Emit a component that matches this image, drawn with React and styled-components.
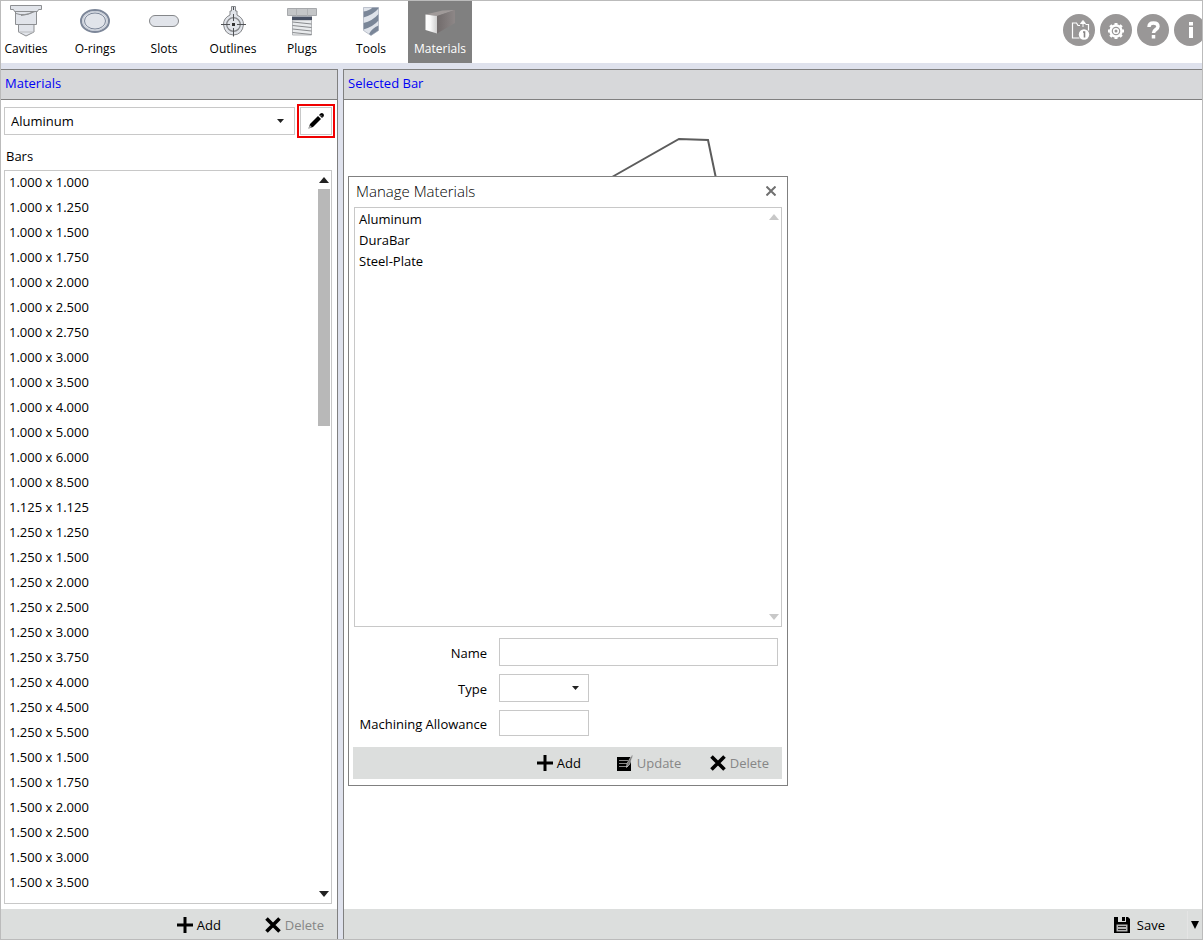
import React, { useState } from 'react';
import styled, { createGlobalStyle } from 'styled-components';

const GlobalStyles = createGlobalStyle`
    *, *::before, *::after {
        box-sizing: border-box;
    }
    html, body {
        margin: 0;
        padding: 0;
        overflow: hidden;
    }
    body, button, input, select {
        font-family: 'Open Sans', 'Noto Sans', sans-serif;
        font-size: 13px;
        line-height: 20px;
        color: #000;
    }
    svg {
        display: block;
        flex-shrink: 0;
    }
`;

const Window = styled.div`
    display: flex;
    flex-direction: column;
    height: 100vh;
    border: 1px solid #bbb;
    background: #dfe2ed;
`;

const TopBar = styled.header`
    display: flex;
    justify-content: space-between;
    height: 62px;
    margin-bottom: 6px;
    background: #fff;
    overflow: hidden;
`;

const Nav = styled.nav`
    display: flex;
    gap: 5px;
    margin-left: -7px;
`;

const NavButton = styled.button`
    display: flex;
    flex-direction: column;
    align-items: center;
    width: 64px;
    padding: 3px 0 0;
    border: 0;
    background: ${({ $active }) => ($active ? '#808080' : 'transparent')};
    color: ${({ $active }) => ($active ? '#fff' : '#000')};
    font-size: 12px;
    line-height: 18px;
`;

const Tools = styled.div`
    display: flex;
    gap: 5px;
    margin: 13px -4px 0 0;
`;

const RoundButton = styled.button`
    width: 32px;
    height: 32px;
    padding: 0;
    border: 0;
    border-radius: 50%;
    background: #999797;
`;

const Body = styled.div`
    display: grid;
    grid-template-columns: 337px minmax(0, 1fr);
    gap: 5px;
    flex: 1;
    min-height: 0;
`;

const Panel = styled.section`
    display: flex;
    flex-direction: column;
    min-height: 0;
    background: #fff;
    border: 0 solid #808080;
    border-width: ${({ $side }) => ($side === 'left' ? '0 1px 0 0' : '0 0 0 1px')};
`;

const PanelTitle = styled.h2`
    margin: 0;
    padding: 3px 4px;
    height: 31px;
    border: 1px solid #808080;
    border-width: 1px 0;
    background: #d7d8da;
    color: #0000f5;
    font-size: 13px;
    font-weight: 400;
`;

const PickerRow = styled.div`
    display: flex;
    align-items: center;
    gap: 2px;
    padding: 4px 2px 0 3px;
`;

const SelectBox = styled.div`
    position: relative;
    width: ${({ $width }) => $width || 'auto'};
    flex: ${({ $width }) => ($width ? 'none' : 1)};

    svg {
        position: absolute;
        right: ${({ $width }) => ($width ? '10px' : '11px')};
        top: 12px;
        pointer-events: none;
    }
`;

const Select = styled.select`
    display: block;
    width: 100%;
    height: 28px;
    padding: 0 24px 0 6px;
    border: 1px solid #c8c8c8;
    border-radius: 0;
    background: #fff;
    appearance: none;
`;

const Highlight = styled.div`
    padding: 1px;
    border: 2px solid #f00000;
`;

const EditButton = styled.button`
    display: flex;
    align-items: center;
    justify-content: center;
    width: 32px;
    height: 28px;
    padding: 0;
    border: 1px solid #c8c8c8;
    background: #fff;
`;

const ListLabel = styled.h3`
    margin: 8px 0 4px 5px;
    font-size: 13px;
    font-weight: 400;
`;

const ListBox = styled.div`
    display: flex;
    flex: 1;
    min-height: 0;
    margin: ${({ $margin }) => $margin};
    border: 1px solid #c8c8c8;
    background: #fff;
`;

const List = styled.ul`
    flex: 1;
    margin: 0;
    padding: 0 0 0 4px;
    overflow: hidden;
    list-style: none;
`;

const BarRow = styled.li`
    height: 25px;
    line-height: 23px;
`;

const MaterialRow = styled.li`
    height: 21px;
    line-height: 23px;
`;

const ScrollTrack = styled.div`
    display: flex;
    flex-direction: column;
    align-items: center;
    justify-content: space-between;
    width: 14px;
    padding: 6px 0;
`;

const ScrollBody = styled.div`
    flex: 1;
    width: 12px;
    margin: 6px 0;
`;

const ScrollThumb = styled.div`
    height: 34%;
    background: #b8b8b8;
`;

const ActionBar = styled.footer`
    display: grid;
    grid-template-columns: ${({ $columns }) => $columns};
    justify-content: end;
    align-items: center;
    height: ${({ $height }) => $height || 30}px;
    padding: ${({ $height }) => ($height ? '0' : '2px')} 13px 0 0;
    background: #dcdedd;
`;

const Action = styled.button`
    display: flex;
    align-items: center;
    gap: ${({ $gap }) => $gap || 4}px;
    padding: 0;
    border: 0;
    background: none;

    &:disabled {
        color: #868686;
    }
`;

const Canvas = styled.div`
    position: relative;
    flex: 1;
    min-height: 0;
`;

const Dialog = styled.div`
    position: absolute;
    top: 76px;
    left: 4px;
    display: flex;
    flex-direction: column;
    width: 440px;
    height: 610px;
    padding: 0 5px 6px 4px;
    border: 1px solid #808080;
    background: #fff;
`;

const DialogHeader = styled.div`
    display: flex;
    align-items: center;
    justify-content: space-between;
    height: 30px;
    padding: 0 6px 2px 3px;
`;

const DialogTitle = styled.h2`
    margin: 0;
    font-size: 15px;
    font-weight: 300;
`;

const CloseButton = styled.button`
    padding: 0;
    border: 0;
    background: none;
`;

const Form = styled.form`
    display: grid;
    grid-template-columns: 134px 1fr;
    grid-template-rows: 28px 28px 26px;
    column-gap: 12px;
    row-gap: 8px;
    align-items: center;
    padding: 11px 4px 11px 0;
`;

const Label = styled.label`
    padding-top: 2px;
    text-align: right;
`;

const Input = styled.input`
    width: ${({ $width }) => $width || '100%'};
    height: 100%;
    padding: 0 6px;
    border: 1px solid #c8c8c8;
`;

const SaveBar = styled.footer`
    display: flex;
    justify-content: flex-end;
    height: 30px;
    padding-top: 2px;
    background: #dcdedd;
`;

const SaveMenu = styled.button`
    width: 15px;
    margin-left: 22px;
    padding: 0 0 0 3px;
    border: 0;
    border-left: 1px solid #e4e4e4;
    background: none;
`;

const CavityIcon = () => (
    <svg width="36" height="36" viewBox="0 0 36 36" fill="#e1e4ea" stroke="#8d8f92">
        <path d="M7.500 6h21v14.500h-21z" />
        <path d="M2.500 1.500h31v4h-3l-1 2h-23l-1-2h-3z" />
        <path d="M8 9.500q8 3 17-1.500M13 11.500q7-.5 14-4" fill="none" />
        <path d="M10.500 20.500h15.500v7.500l-8 4l-7.500-4z" />
        <path d="M10.500 28h15.500" stroke="#b9bbbe" />
    </svg>
);

const ORingIcon = () => (
    <svg width="36" height="36" viewBox="0 0 36 36" fill="none" stroke="#7d8799">
        <ellipse cx="18" cy="17" rx="14" ry="11" fill="#e1e4ea" strokeWidth="2" />
        <ellipse cx="18" cy="17" rx="10.500" ry="8" />
        <ellipse cx="18" cy="17" rx="12.300" ry="9.500" stroke="#c5cbd6" />
    </svg>
);

const SlotIcon = () => (
    <svg width="36" height="36" viewBox="0 0 36 36">
        <rect x="3.500" y="11.500" width="29" height="11" rx="5.500" fill="#e1e4ea" stroke="#85878a" />
    </svg>
);

const OutlineIcon = () => (
    <svg width="36" height="36" viewBox="0 0 36 36" fill="none" stroke="#85878a">
        <path d="M16.500 7v-4.500h4v4.500h1.500v4q6.500 3 6.500 9.500q-1 10-10 10.500q-9-.5-10-10.500q0-6.500 6.500-9.500v-4z" fill="#e1e4ea" />
        <circle cx="18.500" cy="20.500" r="6.800" strokeWidth="1.300" />
        <path d="M6 20.500h9M22 20.500h9M18.500 10v7M18.500 24v8.500M18.500 3v3" stroke="#505255" />
        <path d="M17 19h3v3h-3z" fill="#333" stroke="none" />
    </svg>
);

const PlugIcon = () => (
    <svg width="36" height="36" viewBox="0 0 36 36">
        <path d="M8.500 16h19v15h-19z" fill="#e9ebed" stroke="#b4b6b9" />
        <path d="M8.500 18l19 2M8.500 21.500l19 2M8.500 25l19 2M8.500 28.500l19 2" stroke="#898b8e" />
        <path d="M3.500 4.500h29v7h-29z" fill="#c4c6c8" stroke="#a7a9ac" />
        <path d="M12.500 5v7M23.500 5v7" stroke="#b0b2b4" />
        <path d="M8 12.500h20v3.500h-20z" fill="#475063" />
    </svg>
);

const DrillIcon = () => (
    <svg width="36" height="36" viewBox="0 0 36 36">
        <path d="M10.500 3.500h15v23l-7.500 5l-7.500-5z" fill="#dfe3ea" />
        <path d="M10.500 7.500q6-1 9-4h6v1q-5 6-15 9zM10.500 19q9-2 15-9v6.500q-5 6-15 9zM16 30q3-6 9.500-8.500v5l-7.500 5z" fill="#7a8698" />
        <path d="M10.500 3.500h15v23l-7.500 5l-7.500-5z" fill="none" stroke="#9aa3b1" strokeWidth=".6" />
    </svg>
);

const BarIcon = () => (
    <svg width="36" height="36" viewBox="0 0 36 36">
        <defs>
            <linearGradient id="barFace">
                <stop offset="0" stopColor="#fff" />
                <stop offset=".4" stopColor="#fafafa" />
                <stop offset="1" stopColor="#cfcfcf" />
            </linearGradient>
            <linearGradient id="barSide">
                <stop offset="0" stopColor="#716b6b" />
                <stop offset="1" stopColor="#8d8787" />
            </linearGradient>
        </defs>
        <path d="M3.500 10.500l17-4l12.500-.5l-18 6z" fill="#a09a99" />
        <path d="M15 12l18-6v13l-18 10.500z" fill="url(#barSide)" />
        <path d="M3.500 10.500l11.500 1.500v17.500l-11.500-3.500z" fill="url(#barFace)" />
    </svg>
);

const BackupIcon = () => (
    <svg width="32" height="32" viewBox="0 0 32 32" fill="none" stroke="#fff">
        <path d="M17 11.500h-2l-1.500-2.500h-4v15h7M22.500 10.500h3v6" strokeWidth="1.200" />
        <path d="M20 13v-5M17.500 9.500l2.500-3l2.500 3z" fill="#fff" />
        <circle cx="21" cy="20.500" r="5.200" fill="#fff" stroke="none" />
        <path d="M20 18h1.500v5.500" stroke="#858383" strokeWidth="1.600" />
    </svg>
);

const GearIcon = () => (
    <svg width="32" height="32" viewBox="0 0 32 32" fill="none" stroke="#fff">
        <circle cx="16" cy="17" r="5.500" strokeWidth="2.400" />
        <circle cx="16" cy="17" r="2.300" strokeWidth="1.600" />
        <path
            d="M16 9v3M16 22v3M8 17h3M21 17h3M10.300 11.300l2 2M19.700 20.700l2 2M21.700 11.300l-2 2M12.300 20.700l-2 2"
            strokeWidth="3"
        />
    </svg>
);

const HelpIcon = () => (
    <svg width="32" height="32" viewBox="0 0 32 32" fill="none" stroke="#fff" strokeWidth="3.500">
        <path d="M12 13q0-4 4.500-4t4.500 3.500c0 3-4.500 3-4.500 6.500" />
        <path d="M16.500 21v3.500" />
    </svg>
);

const InfoIcon = () => (
    <svg width="32" height="32" viewBox="0 0 32 32" fill="#fff">
        <path d="M15 8h4v3.500h-4zM15 13h4v11h-4z" />
    </svg>
);

const PencilIcon = () => (
    <svg width="18" height="18" viewBox="0 0 18 18">
        <path d="M1.500 16.500l1.500-4.500l8-8l3 3l-8 8z" />
        <path d="M12 3l1.500-1.500q1.500-1 2.800.2t.2 2.800l-1.500 1.500z" />
        <path d="M1.500 16.500l1.200-3.500l2.300 2.300z" fill="#aaa" />
        <path d="M13.500 3l1.500 1.500" stroke="#888" />
    </svg>
);

const PlusIcon = () => (
    <svg width="16" height="16" viewBox="0 0 16 16" stroke="#000" strokeWidth="3">
        <path d="M8 0v16M0 8h16" />
    </svg>
);

const CrossIcon = () => (
    <svg width="16" height="16" viewBox="0 0 16 16" stroke="#000" strokeWidth="3.600">
        <path d="M1.500 1.500l13 13M14.500 1.500l-13 13" />
    </svg>
);

const UpdateIcon = () => (
    <svg width="16" height="16" viewBox="0 0 16 16">
        <path d="M0 2h14v14h-14z" />
        <path d="M2 5.500h9M2 8.500h8M2 11.500h9" stroke="#8a8a8a" />
        <path d="M9.500 12.500l.5-4l5-8.500l1 .5l-3.500 9z" fill="#777" stroke="#dcdedd" strokeWidth=".6" />
    </svg>
);

const SaveIcon = () => (
    <svg width="16" height="16" viewBox="0 0 16 16">
        <path d="M0 0h14l2 2v14h-16z" />
        <path d="M4 0h8v5h-8z" fill="#dcdedd" />
        <path d="M8 0h3v4h-3z" />
        <path d="M2.500 7.500h11v7h-11z" fill="#b5b5b5" />
        <path d="M4 9.500h8M4 12.500h8" stroke="#222" />
    </svg>
);

const CloseIcon = () => (
    <svg width="10" height="10" viewBox="0 0 10 10" stroke="#707070" strokeWidth="2">
        <path d="M.5.5l9 9M9.500.5l-9 9" />
    </svg>
);

const Caret = ({ width = 7, height = 4, up, color = '#222' }) => (
    <svg width={width} height={height} viewBox="0 0 10 6" preserveAspectRatio="none" fill={color}>
        <path d={up ? 'M0 6h10l-5-6z' : 'M0 0h10l-5 6z'} />
    </svg>
);

const NAV_ITEMS = [
    { label: 'Cavities', Icon: CavityIcon },
    { label: 'O-rings', Icon: ORingIcon },
    { label: 'Slots', Icon: SlotIcon },
    { label: 'Outlines', Icon: OutlineIcon },
    { label: 'Plugs', Icon: PlugIcon },
    { label: 'Tools', Icon: DrillIcon },
    { label: 'Materials', Icon: BarIcon },
];

const TOOL_ITEMS = [
    { label: 'Backup', Icon: BackupIcon },
    { label: 'Settings', Icon: GearIcon },
    { label: 'Help', Icon: HelpIcon },
    { label: 'About', Icon: InfoIcon },
];

const MATERIALS = ['Aluminum', 'DuraBar', 'Steel-Plate'];

const BAR_SIZES = {
    '1.000': ['1.000', '1.250', '1.500', '1.750', '2.000', '2.500', '2.750', '3.000', '3.500', '4.000', '5.000', '6.000', '8.500'],
    '1.125': ['1.125'],
    '1.250': ['1.250', '1.500', '2.000', '2.500', '3.000', '3.750', '4.000', '4.500', '5.500'],
    '1.500': ['1.500', '1.750', '2.000', '2.500', '3.000', '3.500', '4.000'],
};

const BARS = Object.entries(BAR_SIZES).flatMap(([a, sizes]) => sizes.map(b => `${a} x ${b}`));

const MaterialsPanel = () => (
    <Panel $side="left">
        <PanelTitle>Materials</PanelTitle>
        <PickerRow>
            <SelectBox>
                <Select aria-label="Material" defaultValue="Aluminum">
                    {MATERIALS.map(it => (
                        <option key={it}>{it}</option>
                    ))}
                </Select>
                <Caret />
            </SelectBox>
            <Highlight>
                <EditButton aria-label="Manage materials">
                    <PencilIcon />
                </EditButton>
            </Highlight>
        </PickerRow>
        <ListLabel>Bars</ListLabel>
        <ListBox $margin="0 5px 5px 3px">
            <List>
                {BARS.map(it => (
                    <BarRow key={it}>{it}</BarRow>
                ))}
            </List>
            <ScrollTrack>
                <Caret width={10} height={6} up />
                <ScrollBody>
                    <ScrollThumb />
                </ScrollBody>
                <Caret width={10} height={6} />
            </ScrollTrack>
        </ListBox>
        <ActionBar $columns="88px auto">
            <Action>
                <PlusIcon />
                Add
            </Action>
            <Action disabled>
                <CrossIcon />
                Delete
            </Action>
        </ActionBar>
    </Panel>
);

const ManageMaterials = () => {
    const [name, setName] = useState('');
    const [allowance, setAllowance] = useState('');

    return (
        <Dialog role="dialog" aria-labelledby="manage-title">
            <DialogHeader>
                <DialogTitle id="manage-title">Manage Materials</DialogTitle>
                <CloseButton aria-label="Close">
                    <CloseIcon />
                </CloseButton>
            </DialogHeader>
            <ListBox $margin="0 0 0 1px">
                <List>
                    {MATERIALS.map(it => (
                        <MaterialRow key={it}>{it}</MaterialRow>
                    ))}
                </List>
                <ScrollTrack>
                    <Caret width={10} height={6} up color="#c8c8c8" />
                    <Caret width={10} height={6} color="#c8c8c8" />
                </ScrollTrack>
            </ListBox>
            <Form>
                <Label htmlFor="name">Name</Label>
                <Input id="name" value={name} onChange={e => setName(e.target.value)} />
                <Label htmlFor="type">Type</Label>
                <SelectBox $width="90px">
                    <Select id="type" />
                    <Caret />
                </SelectBox>
                <Label htmlFor="allowance">Machining Allowance</Label>
                <Input
                    id="allowance"
                    $width="90px"
                    value={allowance}
                    onChange={e => setAllowance(e.target.value)}
                />
            </Form>
            <ActionBar $columns="80px 93px auto" $height={32}>
                <Action>
                    <PlusIcon />
                    Add
                </Action>
                <Action disabled>
                    <UpdateIcon />
                    Update
                </Action>
                <Action disabled>
                    <CrossIcon />
                    Delete
                </Action>
            </ActionBar>
        </Dialog>
    );
};

const App = () => (
    <Window>
        <GlobalStyles />
        <TopBar>
            <Nav>
                {NAV_ITEMS.map(({ label, Icon }) => (
                    <NavButton key={label} $active={label === 'Materials'}>
                        <Icon />
                        {label}
                    </NavButton>
                ))}
            </Nav>
            <Tools>
                {TOOL_ITEMS.map(({ label, Icon }) => (
                    <RoundButton key={label} aria-label={label}>
                        <Icon />
                    </RoundButton>
                ))}
            </Tools>
        </TopBar>
        <Body>
            <MaterialsPanel />
            <Panel $side="right">
                <PanelTitle>Selected Bar</PanelTitle>
                <Canvas>
                    <svg width="100%" height="100%" fill="none" stroke="#5c5c5c" strokeWidth="2">
                        <path d="M261 81l74-42l29 1l10 48" />
                    </svg>
                    <ManageMaterials />
                </Canvas>
                <SaveBar>
                    <Action $gap={7}>
                        <SaveIcon />
                        Save
                    </Action>
                    <SaveMenu aria-label="Save options">
                        <Caret width={8} height={8} color="#000" />
                    </SaveMenu>
                </SaveBar>
            </Panel>
        </Body>
    </Window>
);

export default App;
